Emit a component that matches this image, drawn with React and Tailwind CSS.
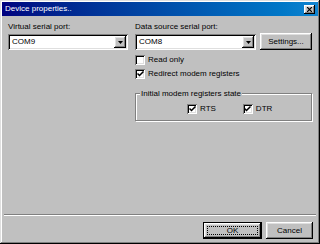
import { useState } from 'react'

const raised = 'shadow-[inset_-1px_-1px_#000,inset_1px_1px_#fff,inset_-2px_-2px_#808080,inset_2px_2px_#dfdfdf]'
const sunken = 'shadow-[inset_1px_1px_#808080,inset_-1px_-1px_#fff,inset_2px_2px_#000,inset_-2px_-2px_#dfdfdf]'

function Combo({ value }) {
  return (
    <div className={`h-[16px] bg-white flex items-center p-[2px] ${sunken}`}>
      <span className="flex-1 pl-[2px] leading-[10px]">{value}</span>
      <div className={`w-[12px] h-[12px] bg-[#c0c0c0] flex items-center justify-center ${raised}`}>
        <svg width="5" height="3" viewBox="0 0 5 3">
          <path d="M0 0h5L2.5 3z" fill="#000" />
        </svg>
      </div>
    </div>
  )
}

function Check({ checked, label, onToggle }) {
  return (
    <div className="flex items-center gap-[3px] h-[10px] cursor-default" onClick={onToggle}>
      <div className={`w-[10px] h-[10px] bg-white flex items-center justify-center ${sunken}`}>
        {checked && (
          <svg width="7" height="6" viewBox="0 0 7 6">
            <path d="M0.5 2.5l2 2 4-4" stroke="#000" strokeWidth="1.5" fill="none" />
          </svg>
        )}
      </div>
      <span className="leading-[10px]">{label}</span>
    </div>
  )
}

function Button({ children, className = '', isDefault }) {
  if (isDefault) {
    return (
      <div className={`h-[17px] border border-black ${className}`}>
        <div className={`h-full flex items-center justify-center p-[3px] ${raised}`}>
          <div className="h-full w-full border border-dotted border-black flex items-center justify-center leading-[10px]">
            {children}
          </div>
        </div>
      </div>
    )
  }
  return (
    <div className={`h-[17px] flex items-center justify-center leading-[10px] ${raised} ${className}`}>
      {children}
    </div>
  )
}

export default function App() {
  const [readOnly, setReadOnly] = useState(false)
  const [redirect, setRedirect] = useState(true)
  const [rts, setRts] = useState(true)
  const [dtr, setDtr] = useState(true)

  return (
    <div
      className="w-[320px] h-[244px] bg-[#c0c0c0] flex flex-col text-[8px] text-black shadow-[inset_-1px_-1px_#000,inset_1px_1px_#dfdfdf,inset_-2px_-2px_#808080,inset_2px_2px_#fff]"
      style={{ fontFamily: '"Liberation Sans", Arial, sans-serif' }}
    >
      {/* Title bar */}
      <div className="mx-[2px] mt-[2px] h-[14px] flex items-center pl-[3px] pr-[3px] bg-gradient-to-r from-[#000080] to-[#1084d0]">
        <span className="flex-1 text-white text-[8px] leading-[10px]">Device properties..</span>
        <div className={`w-[11px] h-[9px] bg-[#c0c0c0] flex items-center justify-center ${raised}`}>
          <svg width="5" height="5" viewBox="0 0 5 5">
            <path d="M0 0l5 5M5 0L0 5" stroke="#000" strokeWidth="1.2" />
          </svg>
        </div>
      </div>

      {/* Body */}
      <div className="flex px-[8px] pt-[6px] gap-[7px]">
        <div className="w-[121px] flex flex-col gap-[2px]">
          <span className="leading-[10px]">Virtual serial port:</span>
          <Combo value="COM9" />
        </div>

        <div className="flex-1 flex flex-col">
          <div className="flex items-end gap-[4px]">
            <div className="w-[121px] flex flex-col gap-[2px]">
              <span className="leading-[10px]">Data source serial port:</span>
              <Combo value="COM8" />
            </div>
            <Button className="w-[52px]">Settings...</Button>
          </div>

          <div className="flex flex-col gap-[4px] mt-[5px]">
            <Check checked={readOnly} label="Read only" onToggle={() => setReadOnly(!readOnly)} />
            <Check checked={redirect} label="Redirect modem registers" onToggle={() => setRedirect(!redirect)} />
          </div>

          <div className="relative mt-[14px] h-[28px] border border-[#808080] shadow-[inset_1px_1px_#fff,1px_1px_#fff] flex items-center pt-[4px]">
            <span className="absolute left-[4px] -top-[5px] px-[1px] bg-[#c0c0c0] leading-[10px]">
              Initial modem registers state
            </span>
            <div className="flex gap-[27px] ml-[51px]">
              <Check checked={rts} label="RTS" onToggle={() => setRts(!rts)} />
              <Check checked={dtr} label="DTR" onToggle={() => setDtr(!dtr)} />
            </div>
          </div>
        </div>
      </div>

      <div className="flex-1" />

      {/* Separator */}
      <div className="mx-[4px] h-[2px] border-t border-[#808080] border-b border-b-white" />

      {/* Buttons */}
      <div className="flex justify-end gap-[4px] pr-[7px] mt-[6px] mb-[5px]">
        <Button isDefault className="w-[59px]">OK</Button>
        <Button className="w-[47px]">Cancel</Button>
      </div>
    </div>
  )
}
